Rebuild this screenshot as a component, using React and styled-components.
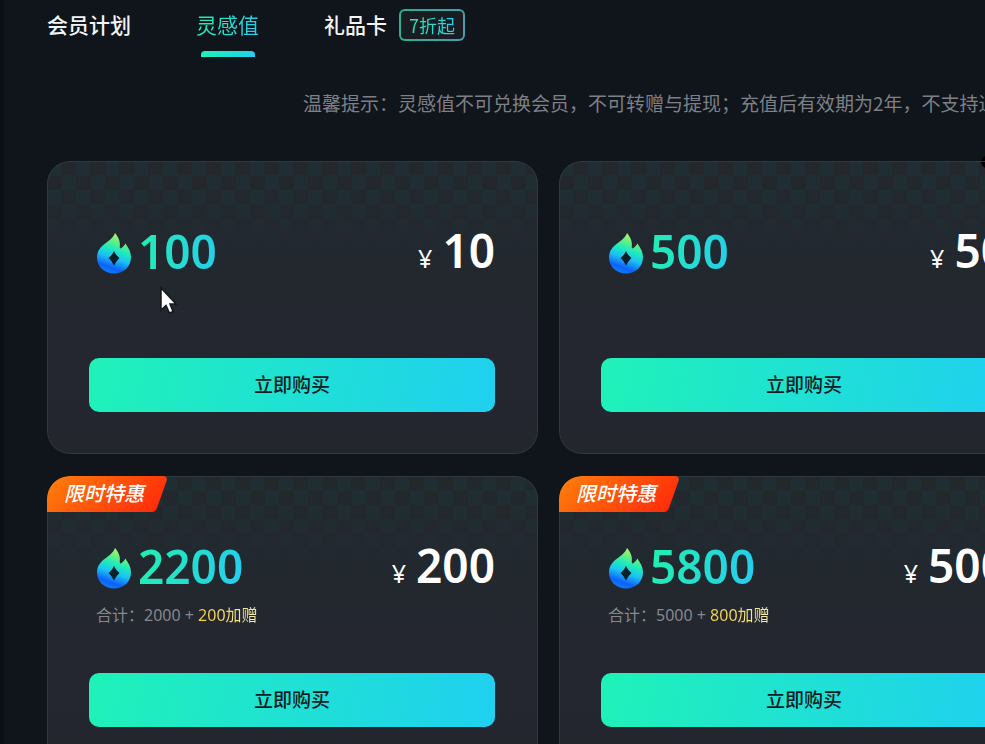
import React from 'react'
import styled, { createGlobalStyle, css } from 'styled-components'

const GlobalStyle = createGlobalStyle`
  * {
    box-sizing: border-box;
  }
  body {
    margin: 0;
    background: #10141b;
    color: #fff;
    font-family: 'Noto Sans', 'Noto Sans CJK SC', sans-serif;
  }
  button {
    font-family: inherit;
    cursor: pointer;
  }
`

const mint = 'linear-gradient(100deg, #1ff2b8, #1fd0f0)'

const gradientText = css`
  background: linear-gradient(100deg, #22efb0, #25cdee);
  background-clip: text;
  color: transparent;
`

const Page = styled.div`
  position: relative;
  min-height: 100vh;
  max-height: 100vh;
  overflow: hidden;
  border-left: 4px solid #0a0e17;
  padding: 0 43px;
`
const Tabs = styled.nav`
  display: flex;
  align-items: flex-start;
  gap: 65px;
  padding-top: 8px;
`
const Tab = styled.a`
  position: relative;
  display: flex;
  align-items: center;
  height: 34px;
  gap: 12px;
  color: #f2f4f6;
  font-family: 'Noto Sans CJK SC', sans-serif;
  font-size: 21px;
  font-weight: ${(p) => (p.$active ? 400 : 500)};
  line-height: 32px;
  text-decoration: none;
  white-space: nowrap;
`
const TabLabel = styled.span`
  padding-bottom: 3px;
  ${(p) => p.$active && gradientText}
`
const Underline = styled.span`
  position: absolute;
  left: 50%;
  bottom: -15px;
  width: 54px;
  height: 6px;
  margin-left: -27px;
  border-radius: 4px 4px 0 0;
  background: ${mint};
`
const Discount = styled.span`
  padding: 0 8px;
  border: 2px solid transparent;
  border-radius: 6px;
  background: linear-gradient(#191d22, #191d22) padding-box, linear-gradient(100deg, #24b48f, #4a9cac) border-box;
  font-size: 18px;
  font-weight: 400;
  line-height: 28px;
`
const Notice = styled.p`
  margin: 47px 0 44px;
  padding-left: 256px;
  color: #7d8187;
  font-family: 'Noto Sans CJK SC', sans-serif;
  font-size: 19px;
  line-height: 28px;
  white-space: nowrap;
`
const Grid = styled.div`
  display: grid;
  grid-template-columns: repeat(2, minmax(491px, 1fr));
  gap: 22px 21px;
`
const Card = styled.section`
  position: relative;
  overflow: hidden;
  display: flex;
  flex-direction: column;
  min-height: 293px;
  padding: 66px 43px 42px 42px;
  border-radius: 23px;
  background: linear-gradient(#222c33, #23272e 40%, #24262e);

  &::before {
    content: '';
    position: absolute;
    inset: 0;
    z-index: 1;
    border: 1px solid #31383f;
    border-radius: 23px;
    pointer-events: none;
  }
`
const Checker = styled.div`
  position: absolute;
  inset: 0 0 auto;
  height: 94px;
  background: repeating-conic-gradient(#23282d 0 25%, #202e33 0 50%) 0 0 / 29px 29px;
  mask-image: linear-gradient(#000 20%, transparent);
`
const Ribbon = styled.div`
  position: absolute;
  z-index: 2;
  top: 0;
  left: 0;
`
const RibbonShape = styled.svg`
  display: block;
`
const RibbonText = styled.span`
  position: absolute;
  inset: 0;
  padding-left: 17px;
  font-family: 'Noto Sans CJK SC', sans-serif;
  font-size: 20px;
  font-style: italic;
  font-weight: 500;
  line-height: 34px;
`
const Summary = styled.div`
  position: relative;
  display: flex;
  align-items: center;
  justify-content: space-between;
  height: 52px;
  padding-left: 8px;
`
const Points = styled.div`
  display: flex;
  align-items: center;
  gap: 7px;
`
const Amount = styled.span`
  ${gradientText}
  padding-bottom: 4px;
  font-size: 46px;
  font-weight: 600;
  line-height: 52px;
`
const Price = styled.div`
  display: flex;
  align-items: baseline;
  gap: 10px;
  padding-bottom: 6px;
  font-size: 46px;
  font-weight: 600;
  line-height: 52px;
`
const Currency = styled.span`
  font-size: 25px;
  font-weight: 400;
  line-height: 28px;
`
const Total = styled.p`
  position: relative;
  margin: 9px 0 0;
  padding-left: 7px;
  color: #85888d;
  font-size: 16px;
  line-height: 24px;
`
const Bonus = styled.span`
  background: linear-gradient(90deg, #f5d33c, #f5ecb0);
  background-clip: text;
  color: transparent;
`
const BuyButton = styled.button`
  position: relative;
  height: 54px;
  margin-top: auto;
  padding: 0 0 2px;
  border: 0;
  border-radius: 10px;
  background: ${mint};
  color: #0b1c22;
  font-size: 19px;
  font-weight: 500;
`
const Pointer = styled.svg`
  position: absolute;
  top: 286px;
  left: 155px;
`
const Dot = styled.span`
  position: absolute;
  top: 156px;
  right: -8px;
  width: 12px;
  height: 12px;
  border-radius: 50%;
  background: #000;
`

const plans = [
  { amount: '100', price: '10' },
  { amount: '500', price: '50' },
  { amount: '2200', price: '200', base: '2000', bonus: '200' },
  { amount: '5800', price: '500', base: '5000', bonus: '800' },
]

const Flame = ({ id }) => (
  <svg width="34" height="41" viewBox="0 0 34 41" aria-hidden="true">
    <defs>
      <linearGradient id={id} x1="0.7" y1="0" x2="0.4" y2="1">
        <stop offset="0" stopColor="#c4f26c" />
        <stop offset="0.22" stopColor="#6cf07e" />
        <stop offset="0.42" stopColor="#1feabc" />
        <stop offset="0.62" stopColor="#1cc4f2" />
        <stop offset="0.86" stopColor="#0d62fb" />
        <stop offset="1" stopColor="#0f7cf8" />
      </linearGradient>
    </defs>
    <path
      d="M18 0C21 3.500 23.500 8 22.800 13C22.500 15.500 23.500 16 24.500 15C26 13.500 27.500 12.500 28.500 10.500C30 13.500 34 17.500 34 24.500C34 33.500 26.500 40.500 17 40.500C7.500 40.500 0 33.500 0 24.500C0 18.500 3 14.500 7.500 11C12 7.500 16.500 4.500 18 0Z"
      fill={`url(#${id})`}
    />
    <path d="M17 18Q19 22.500 22.500 25Q19 28 17 32.500Q15 28 11.500 25Q15 22.500 17 18Z" fill="#0d1f28" />
  </svg>
)

const LimitedRibbon = ({ id }) => (
  <Ribbon>
    <RibbonShape width="120" height="36" viewBox="0 0 120 36" aria-hidden="true">
      <defs>
        <linearGradient id={id} x1="0" y1="0.3" x2="1" y2="0.6">
          <stop offset="0" stopColor="#ff7a0a" />
          <stop offset="1" stopColor="#ff2d0c" />
        </linearGradient>
      </defs>
      <path d="M22 0H116Q121 0 119.500 5L110 32Q108.500 36 105 36H0V22A22 22 0 0 1 22 0Z" fill={`url(#${id})`} />
    </RibbonShape>
    <RibbonText>限时特惠</RibbonText>
  </Ribbon>
)

const PlanCard = ({ plan }) => (
  <Card>
    <Checker />
    {plan.bonus && <LimitedRibbon id={`ribbon${plan.amount}`} />}
    <Summary>
      <Points>
        <Flame id={`flame${plan.amount}`} />
        <Amount>{plan.amount}</Amount>
      </Points>
      <Price>
        <Currency>¥</Currency>
        {plan.price}
      </Price>
    </Summary>
    {plan.bonus && (
      <Total>
        合计：{plan.base} + <Bonus>{plan.bonus}加赠</Bonus>
      </Total>
    )}
    <BuyButton type="button">立即购买</BuyButton>
  </Card>
)

const App = () => {
  return (
    <Page>
      <GlobalStyle />
      <Tabs>
        <Tab href="#member">
          <TabLabel>会员计划</TabLabel>
        </Tab>
        <Tab href="#points" $active>
          <TabLabel $active>灵感值</TabLabel>
          <Underline />
        </Tab>
        <Tab href="#gift">
          <TabLabel>礼品卡</TabLabel>
          <Discount>
            <TabLabel $active>7折起</TabLabel>
          </Discount>
        </Tab>
      </Tabs>
      <Notice>温馨提示：灵感值不可兑换会员，不可转赠与提现；充值后有效期为2年，不支持退</Notice>
      <Grid>
        {plans.map((plan) => (
          <PlanCard key={plan.amount} plan={plan} />
        ))}
      </Grid>
      <Dot />
      <Pointer width="20" height="28" viewBox="0 0 20 28" aria-hidden="true">
        <path d="M2 2V24L7 19.500L10.500 27L14 25.500L11 18H17Z" fill="#fff" stroke="#15181d" strokeWidth="1.500" />
      </Pointer>
    </Page>
  )
}

export default App
